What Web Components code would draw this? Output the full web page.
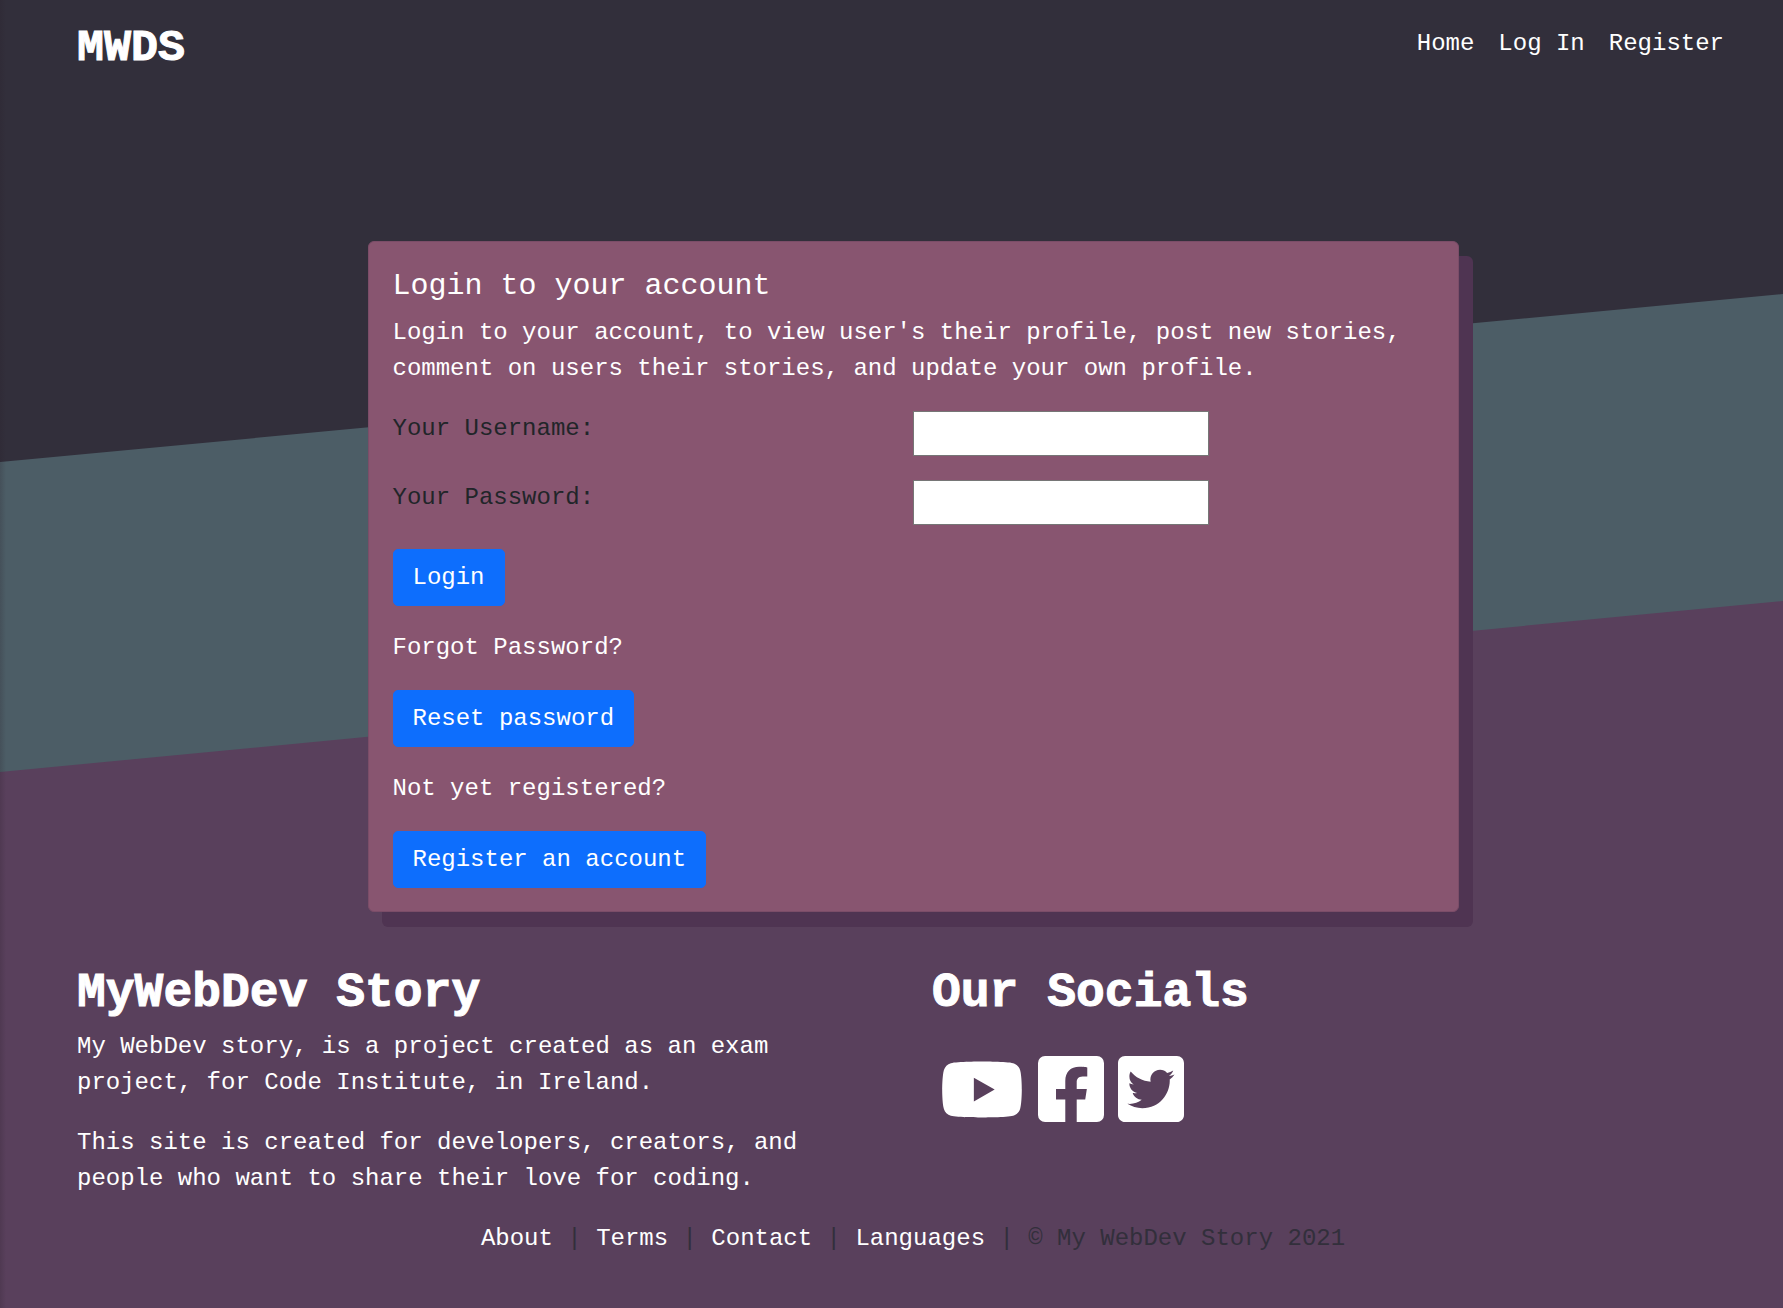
<!DOCTYPE html>
<html lang="en">
<head>
<meta charset="utf-8">
<title>MyWebDev Story</title>
<style>
html, body { margin: 0; }
body { background: #59405c; font: 24px/36px "Liberation Mono", monospace; color: #212529; }
</style>
</head>
<body>
<mwds-page>
  <mwds-nav slot="nav"></mwds-nav>
  <mwds-login></mwds-login>
  <mwds-footer slot="footer"></mwds-footer>
</mwds-page>
<script>
function define(name, html) {
  const template = document.createElement('template');
  template.innerHTML = '<style>*{box-sizing:border-box}h1,h2,p{margin:0}</style>' + html;
  customElements.define(name, class extends HTMLElement {
    constructor() {
      super();
      this.attachShadow({ mode: 'open' }).append(template.content.cloneNode(true));
    }
  });
}

define('mwds-page', `
<style>
:host { display: flex; flex-direction: column; min-height: 100vh; position: relative; z-index: 0; }
.bands { position: absolute; inset: 0; width: 100%; height: 100%; z-index: -1; }
.shade { position: absolute; inset: 0 auto 0 0; width: 6px; z-index: -1; background: linear-gradient(90deg, rgba(40,30,40,.2), transparent); }
main { padding: 145px 0 52px 43px; }
</style>
<svg class="bands" viewBox="0 0 1783 1308" preserveAspectRatio="none" aria-hidden="true">
  <path fill="#59405c" d="M0 0h1783v1308H0z"/>
  <path fill="#4c5d66" d="M0 0h1783v601L0 772z"/>
  <path fill="#322f3b" d="M0 0h1783v294L0 462z"/>
</svg>
<div class="shade"></div>
<slot name="nav"></slot>
<main><slot></slot></main>
<slot name="footer"></slot>`);

define('mwds-nav', `
<style>
:host { display: block; }
nav { display: flex; justify-content: space-between; align-items: flex-start; padding: 15px 59px 13px 77px; }
a { color: #fff; text-decoration: none; }
.brand { font-size: 45px; line-height: 68px; font-weight: 700; -webkit-text-stroke: 1px #fff; }
ul { display: flex; gap: 24px; margin: 0; padding: 11px 0 0; list-style: none; }
</style>
<nav>
  <a class="brand" href="#">MWDS</a>
  <ul><li><a href="#">Home</a></li><li><a href="#">Log In</a></li><li><a href="#">Register</a></li></ul>
</nav>`);

define('mwds-button', `
<style>
:host { display: block; }
button { display: block; font: inherit; color: #fff; background: #0d6efd; border: 1px solid #0d6efd; border-radius: 5px; padding: 10px 19px 9px; cursor: pointer; }
</style>
<button type="button"><slot></slot></button>`);

define('mwds-login', `
<style>
:host { display: block; width: 63%; max-width: 1091px; margin: 0 auto; }
section { background: #885570; border: 1px solid #7b4d68; border-radius: 6px; box-shadow: 14px 15px 0 #4f3452; padding: 26px 24px 23px; color: #fff; }
h1 { font-size: 30px; line-height: 36px; font-weight: 400; padding-bottom: 11px; }
form { display: flex; flex-direction: column; gap: 24px; }
.row { display: grid; grid-template-columns: 1fr 1fr; align-items: start; color: #212529; }
input { width: 296px; height: 45px; border: 1px solid #767676; border-radius: 0; background: #fff; font: inherit; padding: 1px 2px; }
</style>
<section>
  <h1>Login to your account</h1>
  <form>
    <p>Login to your account, to view user's their profile, post new stories, comment on users their stories, and update your own profile.</p>
    <div class="row"><label for="user">Your Username:</label><input id="user" type="text"></div>
    <div class="row"><label for="pass">Your Password:</label><input id="pass" type="password"></div>
    <mwds-button>Login</mwds-button>
    <p>Forgot Password?</p>
    <mwds-button>Reset password</mwds-button>
    <p>Not yet registered?</p>
    <mwds-button>Register an account</mwds-button>
  </form>
</section>`);

define('mwds-footer', `
<style>
:host { display: block; color: #fff; }
.columns { display: grid; grid-template-columns: 1fr 1fr; column-gap: 4px; padding: 0 0 0 77px; }
.about { padding-right: 48px; display: flex; flex-direction: column; gap: 24px; }
h2 { font-size: 48px; line-height: 58px; font-weight: 700; -webkit-text-stroke: 1px #fff; }
h2 + p { margin-top: -17px; }
.social { display: flex; gap: 14px; padding: 29px 0 0 8px; }
.social a { display: flex; align-items: center; height: 76px; }
svg { display: block; fill: #fff; }
.legal { text-align: center; padding: 24px 0 48px 43px; color: #322f3b; }
.legal a { color: #fff; text-decoration: none; }
</style>
<div class="columns">
  <div class="about">
    <h2>MyWebDev Story</h2>
    <p>My WebDev story, is a project created as an exam project, for Code Institute, in Ireland.</p>
    <p>This site is created for developers, creators, and people who want to share their love for coding.</p>
  </div>
  <div>
    <h2>Our Socials</h2>
    <div class="social">
      <a href="#" aria-label="YouTube"><svg width="84" height="75" viewBox="0 0 576 512"><path d="M549.655 124.083c-6.281-23.65-24.787-42.276-48.284-48.597C458.781 64 288 64 288 64S117.22 64 74.629 75.486c-23.497 6.322-42.003 24.947-48.284 48.597-11.412 42.867-11.412 132.305-11.412 132.305s0 89.438 11.412 132.305c6.281 23.65 24.787 41.5 48.284 47.821C117.22 448 288 448 288 448s170.78 0 213.371-11.486c23.497-6.321 42.003-24.171 48.284-47.821 11.412-42.867 11.412-132.305 11.412-132.305s0-89.438-11.412-132.305zm-317.51 213.508V175.185l142.739 81.205-142.739 81.201z"/></svg></a>
      <a href="#" aria-label="Facebook"><svg width="66" height="76" viewBox="0 0 448 512"><path d="M400 32H48A48 48 0 0 0 0 80v352a48 48 0 0 0 48 48h137.250V327.690h-63V256h63v-54.640c0-62.150 37-96.480 93.670-96.480 27.140 0 55.520 4.840 55.520 4.840v61h-31.270c-30.810 0-40.420 19.120-40.420 38.730V256h68.780l-11 71.690h-57.780V480H400a48 48 0 0 0 48-48V80a48 48 0 0 0-48-48z"/></svg></a>
      <a href="#" aria-label="Twitter"><svg width="66" height="76" viewBox="0 0 448 512"><path d="M400 32H48C21.500 32 0 53.500 0 80v352c0 26.500 21.500 48 48 48h352c26.500 0 48-21.500 48-48V80c0-26.500-21.500-48-48-48zm-48.900 158.800c.2 2.800.2 5.700.2 8.500 0 86.700-66 186.600-186.600 186.600-37.200 0-71.700-10.800-100.700-29.400 5.300.6 10.400.8 15.800.8 30.700 0 58.900-10.400 81.400-28-28.800-.6-53-19.500-61.300-45.500 10.100 1.500 19.200 1.500 29.600-1.200-30-6.100-52.500-32.500-52.500-64.400v-.8c8.700 4.900 18.900 7.900 29.600 8.300a65.447 65.447 0 0 1-29.200-54.600c0-12.200 3.200-23.400 8.900-33.100 32.300 39.800 80.800 65.800 135.200 68.600-9.300-44.500 24-80.600 64-80.600 18.900 0 35.900 7.900 47.900 20.700 14.800-2.800 29-8.300 41.600-15.800-4.900 15.200-15.200 28-28.800 36.100 13.200-1.400 26-5.100 37.800-10.200-8.900 13.100-20.100 24.700-32.900 34z"/></svg></a>
    </div>
  </div>
</div>
<div class="legal"><a href="#">About</a> | <a href="#">Terms</a> | <a href="#">Contact</a> | <a href="#">Languages</a> | © My WebDev Story 2021</div>`);
</script>
</body>
</html>
